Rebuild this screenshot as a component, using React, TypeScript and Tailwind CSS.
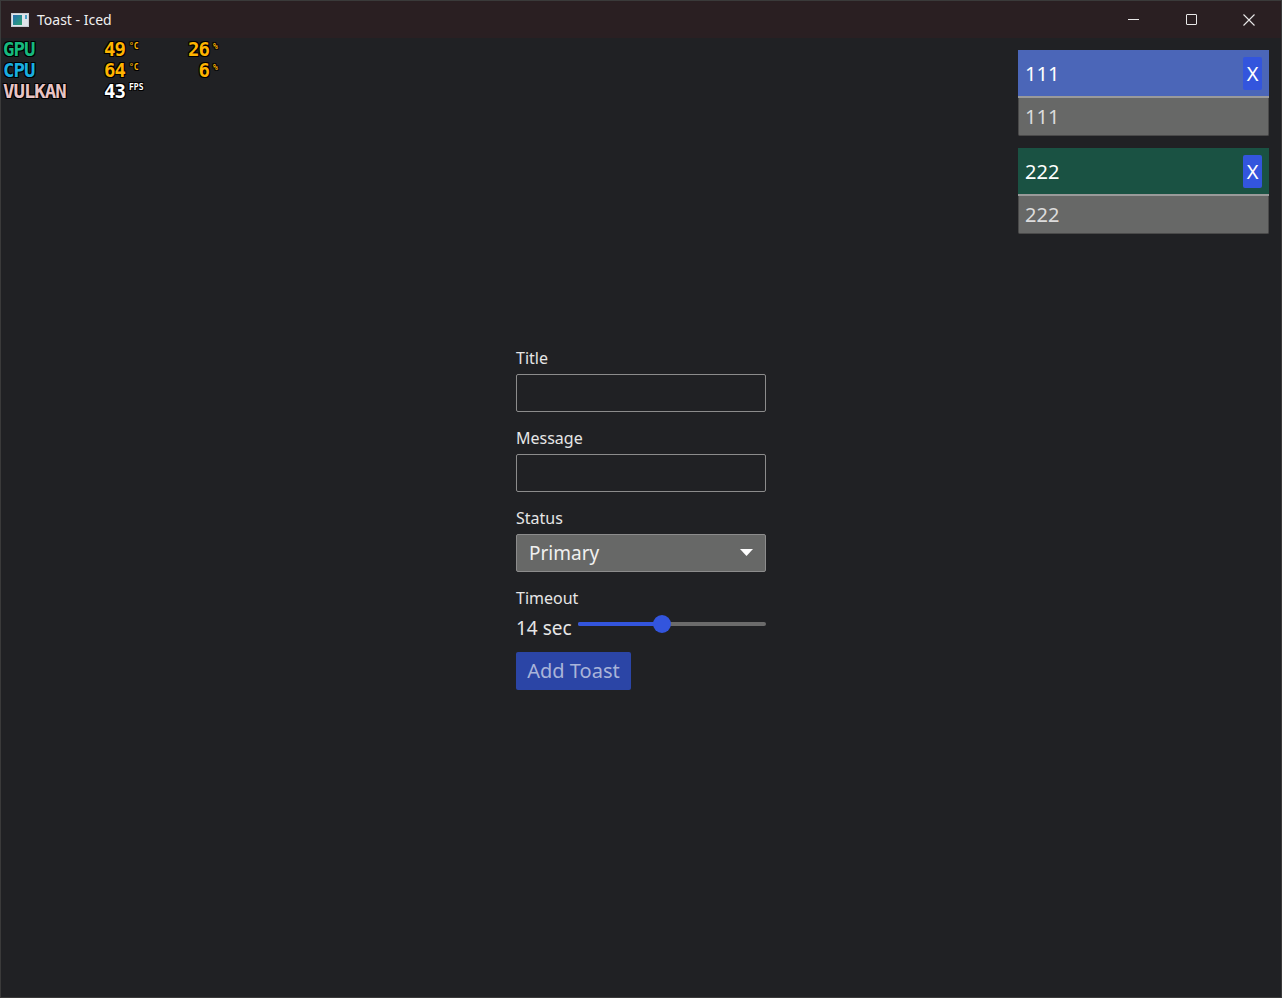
import React from "react";

const osdFont = { fontFamily: '"DejaVu Sans Mono", "Liberation Mono", monospace' };

function Osd() {
  const shadow = "[text-shadow:1px_1px_0_#000,-1px_-1px_0_#000,1px_-1px_0_#000,-1px_1px_0_#000]";
  return (
    <div className="absolute left-[2px] top-[38px] font-bold leading-[21px]" style={osdFont}>
      <div className={`flex items-end h-[21px] ${shadow}`}>
        <span className="w-[98px] text-[19px] text-[#17b87e] tracking-[-1px]">GPU</span>
        <span className="w-[24px] text-right text-[19px] text-[#ffb400] tracking-[-1px]">49</span>
        <span className="w-[58px] pl-[4px] text-[8px] leading-[16px] self-start text-[#ffb400]">°C</span>
        <span className="w-[26px] text-right text-[19px] text-[#ffb400] tracking-[-1px]">26</span>
        <span className="pl-[4px] text-[8px] leading-[16px] self-start text-[#ffb400]">%</span>
      </div>
      <div className={`flex items-end h-[21px] ${shadow}`}>
        <span className="w-[98px] text-[19px] text-[#1aaee0] tracking-[-1px]">CPU</span>
        <span className="w-[24px] text-right text-[19px] text-[#ffb400] tracking-[-1px]">64</span>
        <span className="w-[58px] pl-[4px] text-[8px] leading-[16px] self-start text-[#ffb400]">°C</span>
        <span className="w-[26px] text-right text-[19px] text-[#ffb400] tracking-[-1px]">6</span>
        <span className="pl-[4px] text-[8px] leading-[16px] self-start text-[#ffb400]">%</span>
      </div>
      <div className={`flex items-end h-[21px] ${shadow}`}>
        <span className="w-[98px] text-[19px] text-[#e8c4c4] tracking-[-1px]">VULKAN</span>
        <span className="w-[24px] text-right text-[19px] text-white tracking-[-1px]">43</span>
        <span className="pl-[4px] text-[8px] leading-[14px] self-start text-white">FPS</span>
      </div>
    </div>
  );
}

function Toast({ title, body, color }: { title: string; body: string; color: string }) {
  return (
    <div className="w-[251px] flex flex-col">
      <div className={`h-[46px] flex items-center justify-between pl-[7px] pr-[7px] pt-[1px] ${color}`}>
        <span className="text-[20px] text-white">{title}</span>
        <div className="w-[19px] h-[33px] bg-[#3355dd] rounded-[2px] flex items-center justify-center text-[20px] text-white">X</div>
      </div>
      <div className="h-[2px] bg-[#9a9a9a]" />
      <div className="h-[38px] bg-[#676867] border-b border-x border-[#4a4a4a] rounded-b-[2px] flex items-center pl-[6px] pt-[1px] text-[20px] text-[#dcdcdc]">
        {body}
      </div>
    </div>
  );
}

export default function App() {
  return (
    <div
      className="w-[1282px] h-[998px] flex flex-col bg-[#202124] relative overflow-hidden border border-[#3a3a3a]"
      style={{ fontFamily: '"Noto Sans", "Open Sans", sans-serif' }}
    >
      <div className="h-[37px] shrink-0 bg-[#2a1f22] flex items-center">
        <div className="ml-[10px] w-[18px] h-[14px] bg-[#dfe4ea] border border-[#c7ccd2] flex items-center pl-[1px]">
          <div className="w-[9px] h-[10px] bg-gradient-to-br from-[#2b6cb0] to-[#2fa36b]" />
          <div className="ml-[3px] w-[2px] h-[4px] bg-[#4aa0c8] self-start mt-[1px]" />
        </div>
        <span className="ml-[8px] text-[14px] text-[#f0f0f0]" style={{ fontFamily: '"Noto Sans", sans-serif' }}>
          Toast - Iced
        </span>
        <div className="ml-auto mr-[3px] flex h-full items-center">
          <div className="w-[58px] flex justify-center">
            <div className="w-[11px] h-[1px] bg-[#e8e8e8]" />
          </div>
          <div className="w-[58px] flex justify-center">
            <div className="w-[11px] h-[11px] border border-[#e8e8e8] rounded-[1px]" />
          </div>
          <div className="w-[58px] flex justify-center">
            <svg width="12" height="12" viewBox="0 0 12 12">
              <path d="M0.5 0.5 L11.5 11.5 M11.5 0.5 L0.5 11.5" stroke="#e8e8e8" strokeWidth="1.1" />
            </svg>
          </div>
        </div>
      </div>

      <Osd />

      <div className="absolute right-[12px] top-[49px] flex flex-col gap-[12px]">
        <Toast title="111" body="111" color="bg-[#4b66b8]" />
        <Toast title="222" body="222" color="bg-[#1a5243]" />
      </div>

      <div className="flex-1 flex items-center justify-center">
        <div className="w-[250px] flex flex-col text-[#e6e6e6] mt-[1px]">
          <div className="text-[16px] leading-[22px]">Title</div>
          <div className="mt-[5px] h-[38px] border border-[#8c8c8c] rounded-[2px]" />
          <div className="mt-[15px] text-[16px] leading-[22px]">Message</div>
          <div className="mt-[5px] h-[38px] border border-[#8c8c8c] rounded-[2px]" />
          <div className="mt-[15px] text-[16px] leading-[22px]">Status</div>
          <div className="mt-[5px] h-[38px] border border-[#8c8c8c] rounded-[2px] bg-[#676867] flex items-center px-[12px]">
            <span className="text-[19px] text-[#f0f0f0] pt-[2px]">Primary</span>
            <svg className="ml-auto" width="13" height="7" viewBox="0 0 13 7">
              <path d="M0 0 H13 L6.5 7 Z" fill="#ffffff" />
            </svg>
          </div>
          <div className="mt-[15px] text-[16px] leading-[22px]">Timeout</div>
          <div className="mt-[7px] h-[24px] flex items-center">
            <span className="text-[19px] leading-[24px] text-[#e6e6e6]">14 sec</span>
            <div className="ml-auto mb-[8px] w-[188px] relative h-[20px] flex items-center">
              <div className="w-full h-[4px] rounded-full bg-[#6b6b6b] flex">
                <div className="w-[84px] h-full rounded-full bg-[#3355dd]" />
              </div>
              <div className="absolute left-[75px] top-[1px] w-[18px] h-[18px] rounded-full bg-[#3355dd]" />
            </div>
          </div>
          <div className="mt-[12px] w-[115px] h-[38px] bg-[#2b45a6] rounded-[2px] flex items-center justify-center text-[20px] text-[#a9b4d9]">
            Add Toast
          </div>
        </div>
      </div>
    </div>
  );
}
